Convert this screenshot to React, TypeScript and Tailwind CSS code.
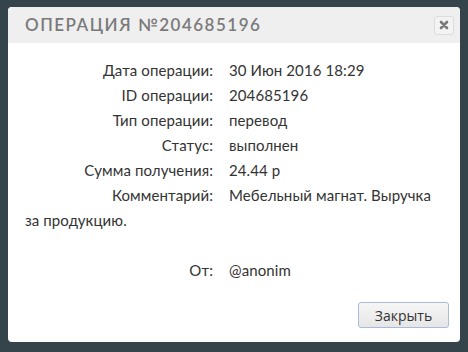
import React from "react";

const rows: [string, string][] = [
  ["Дата операции:", "30 Июн 2016 18:29"],
  ["ID операции:", "204685196"],
  ["Тип операции:", "перевод"],
  ["Статус:", "выполнен"],
  ["Сумма получения:", "24.44 р"],
];

export default function App() {
  return (
    <div className="h-[352px] w-[468px] bg-[#35434a] pt-[7px] pl-[8px]" style={{ fontFamily: "Lato, 'Open Sans', sans-serif" }}>
      <div className="flex h-[335px] w-[452px] flex-col overflow-hidden rounded-[4px] bg-white">
        <div className="flex h-[36px] items-center justify-between bg-[#efefef] pl-[17px] pr-[6px]">
          <div className="text-[17px] font-semibold tracking-[1.5px] text-[#7a7a7a]">ОПЕРАЦИЯ №204685196</div>
          <button className="flex h-[19px] w-[20px] items-center justify-center rounded-[3px] border border-[#dcdcdc] bg-[#f3f3f3]">
            <svg width="10" height="10" viewBox="0 0 10 10">
              <path d="M2 2 L8 8 M8 2 L2 8" stroke="#7a7a7a" strokeWidth="2.6" strokeLinecap="round" />
            </svg>
          </button>
        </div>
        <div className="flex-1 px-[17px] pt-[15px] text-[15px] leading-[25px] tracking-[0.1px] text-[#333]">
          {rows.map(([l, v]) => (
            <div key={l}>
              <span className="inline-block w-[204px] pr-[16px] text-right">{l}</span>
              {v}
            </div>
          ))}
          <div>
            <span className="inline-block w-[204px] pr-[16px] text-right">Комментарий:</span>
            Мебельный магнат. Выручка за продукцию.
          </div>
          <div className="h-[25px]" />
          <div>
            <span className="inline-block w-[204px] pr-[16px] text-right">От:</span>
            @anonim
          </div>
        </div>
        <div className="flex justify-end pb-[14px] pr-[11px]">
          <button
            className="h-[26px] w-[91px] rounded-[3px] border border-[#a9bcd6] bg-gradient-to-b from-[#f6f6f6] to-[#e6e6e6] text-[14px] text-[#333]"
            style={{ fontFamily: "'Open Sans', sans-serif" }}
          >
            Закрыть
          </button>
        </div>
      </div>
    </div>
  );
}
